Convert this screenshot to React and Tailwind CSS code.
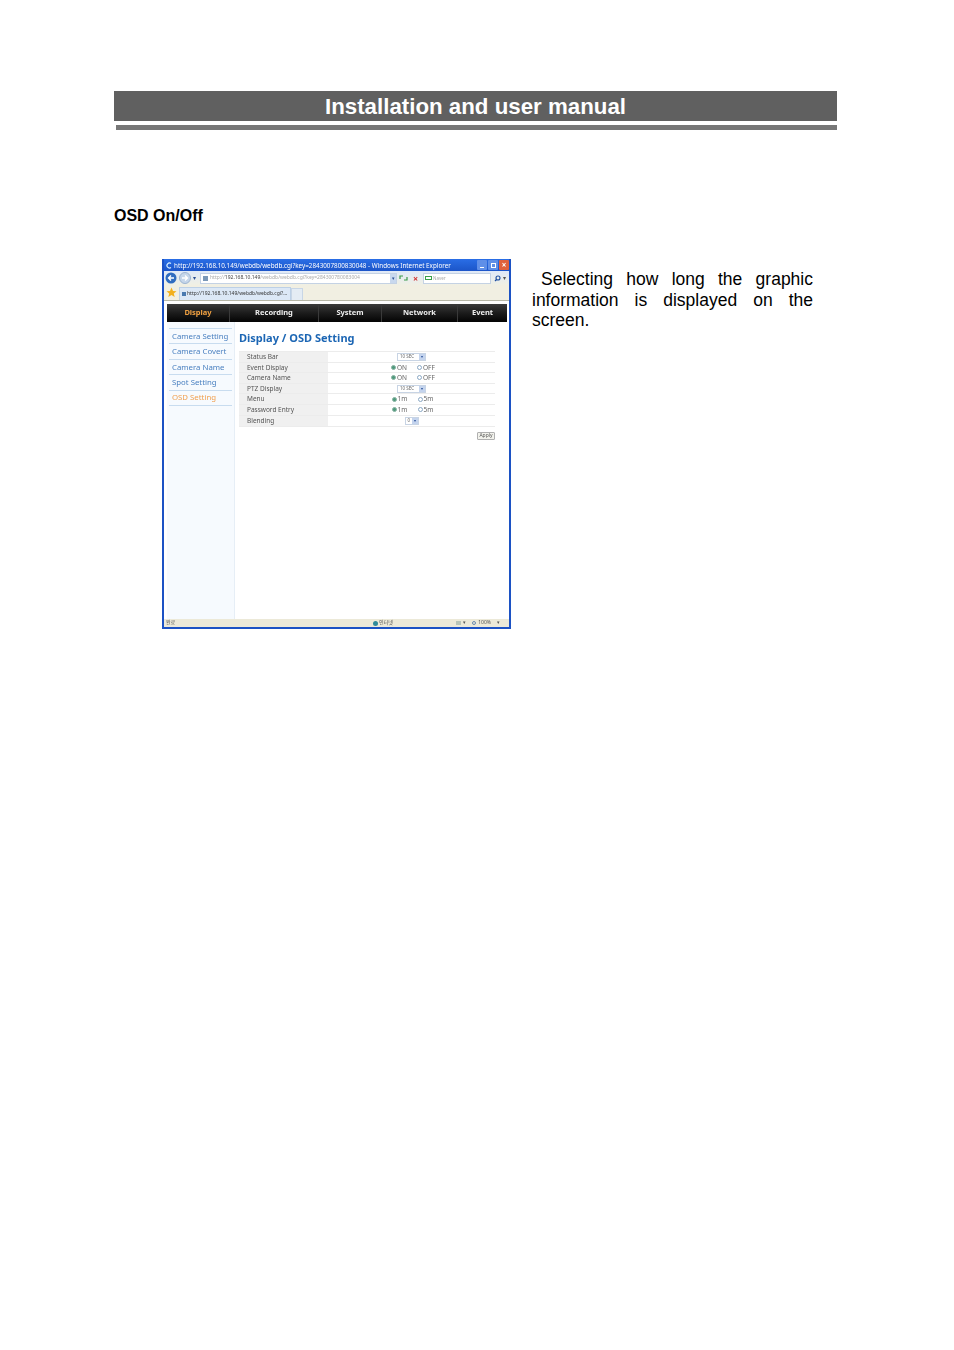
const sideItems = ["Camera Setting", "Camera Covert", "Camera Name", "Spot Setting", "OSD Setting"];

const navItems = [
    { label: "Display", width: "w-[63px]", active: true },
    { label: "Recording", width: "w-[89px]" },
    { label: "System", width: "w-[63px]" },
    { label: "Network", width: "w-[76px]" },
    { label: "Event", width: "w-[49px]" },
];

const Select = ({ label, width }) => (
    <span className={`flex h-[8px] items-center justify-between border border-[#c8d4e4] bg-white pl-[2px] text-[4.5px] text-[#666] ${width}`}>
        {label}
        <span className="flex h-full w-[6px] items-center justify-center bg-[#c4d4ee] text-[4px] leading-none text-[#2a4f96]">▾</span>
    </span>
);

const Radio = ({ checked, label, width }) => (
    <span className={`flex items-center gap-[1px] text-[6.5px] text-[#666] ${width}`}>
        <span className={`h-[5px] w-[5px] rounded-full border ${checked ? "border-[#8ab4a4] bg-[#4f9a7c]" : "border-[#8aa8c4] bg-white"}`} />
        {label}
    </span>
);

const RadioPair = ({ first, second, offset }) => (
    <div className={`flex items-center ${offset}`}>
        <Radio checked label={first} width="w-[26px]" />
        <Radio label={second} width="w-[24px]" />
    </div>
);

const rows = [
    { label: "Status Bar", value: <Select label="10 SEC" width="w-[29px]" /> },
    { label: "Event Display", value: <RadioPair first="ON" second="OFF" offset="ml-[9px]" /> },
    { label: "Camera Name", value: <RadioPair first="ON" second="OFF" offset="ml-[9px]" /> },
    { label: "PTZ Display", value: <Select label="10 SEC" width="w-[29px]" /> },
    { label: "Menu", value: <RadioPair first="1m" second="5m" offset="ml-[10px]" /> },
    { label: "Password Entry", value: <RadioPair first="1m" second="5m" offset="ml-[10px]" /> },
    { label: "Blending", value: <Select label="0" width="w-[14px]" /> },
];

const BrowserChrome = () => (
    <>
        <div className="flex h-[12px] items-center justify-between bg-gradient-to-b from-[#2a6ee6] to-[#1c55c8] pl-[2px]">
            <span className="flex items-center gap-[2px] pt-[1px] text-[6.3px] whitespace-nowrap text-white">
                <svg width="6" height="7" viewBox="0 0 6 7">
                    <path d="M5 1.500A2.500 2.500 0 1 0 5 5.500" fill="none" stroke="#d8f0ff" strokeWidth="1.2" />
                </svg>
                http://192.168.10.149/webdb/webdb.cgi?key=2843007800830048 - Windows Internet Explorer
            </span>
            <div className="flex gap-[1px]">
                <span className="flex h-[10px] w-[10px] items-end justify-center rounded-[1px] bg-[#5f8fe8] pb-[2px]">
                    <span className="h-[1px] w-[4px] bg-white" />
                </span>
                <span className="flex h-[10px] w-[10px] items-center justify-center rounded-[1px] bg-[#5f8fe8]">
                    <span className="h-[5px] w-[5px] border border-white" />
                </span>
                <span className="flex h-[10px] w-[10px] items-center justify-center rounded-[1px] bg-[#e0623c] text-[8px] leading-none font-bold text-white">×</span>
            </div>
        </div>
        <div className="flex h-[14px] items-center bg-gradient-to-b from-[#dfe9f8] to-[#f0f0e4] pl-[1px]">
            <svg width="13" height="12" viewBox="0 0 13 12" className="shrink-0">
                <circle cx="6" cy="6" r="5.500" fill="#2f6cc0" />
                <path d="M9 6H4M6 3.500 3.500 6 6 8.500" fill="none" stroke="#fff" strokeWidth="1.4" />
            </svg>
            <svg width="12" height="12" viewBox="0 0 12 12" className="ml-[1px] shrink-0">
                <circle cx="6" cy="6" r="5.500" fill="#c5d6ea" stroke="#9db4d0" />
                <path d="M3 6h5M6 3.500 8.500 6 6 8.500" fill="none" stroke="#fff" strokeWidth="1.3" />
            </svg>
            <span className="ml-[2px] w-[6px] text-[6px] leading-none text-[#2a4f96]">▾</span>
            <div className="ml-[1px] flex h-[11px] w-[197px] items-center justify-between border border-[#c4d2e4] bg-white pl-[2px]">
                <span className="flex items-center gap-[2px] overflow-hidden text-[5px] whitespace-nowrap text-[#aaa]">
                    <span className="h-[5px] w-[5px] shrink-0 bg-[#7a98b8]" />
                    <span>http://<span className="text-[#444]">192.168.10.149</span>/webdb/webdb.cgi?key=284300780083004</span>
                </span>
                <span className="flex h-full w-[6px] shrink-0 items-center justify-center bg-[#c8d8ee] text-[5px] leading-none text-[#2a4f96]">▾</span>
            </div>
            <svg width="11" height="8" viewBox="0 0 11 8" className="ml-[1px] shrink-0">
                <path d="M2 5V2h3M9 3v3H6" fill="none" stroke="#3a9a4a" strokeWidth="1.2" />
            </svg>
            <span className="ml-[1px] w-[11px] text-center text-[9px] leading-none font-bold text-[#d03030]">×</span>
            <div className="ml-[2px] flex h-[11px] w-[68px] items-center gap-[1px] border border-[#c4d2e4] bg-white pl-[1px] text-[4.5px] text-[#aaa]">
                <span className="h-[4px] w-[7px] border border-[#3aa04a]" />
                Naver
            </div>
            <svg width="7" height="7" viewBox="0 0 7 7" className="ml-[3px] shrink-0">
                <circle cx="4" cy="3" r="2" fill="none" stroke="#1f4fa0" strokeWidth="1.1" />
                <path d="M2.500 4.500 1 6" stroke="#1f4fa0" strokeWidth="1.300" />
            </svg>
            <span className="ml-[2px] text-[6px] leading-none text-[#555]">▾</span>
        </div>
        <div className="flex h-[16px] items-end border-b border-[#b8b8a8] bg-[#f1efe2] pl-[2px]">
            <svg width="11" height="11" viewBox="0 0 11 11" className="mb-[2px] shrink-0">
                <path d="m5.500.5 1.500 3.400 3.500.3-2.700 2.300.9 3.600-3.200-2-3.200 2 .9-3.600L.5 4.200 4 3.900z" fill="#f2b01e" />
            </svg>
            <div className="ml-[2px] flex h-[13px] w-[112px] items-center gap-[1px] border border-b-0 border-[#bcd0e6] bg-[#dce8f6] pl-[2px] text-[5px] whitespace-nowrap text-[#333]">
                <span className="h-[4px] w-[4px] shrink-0 bg-[#4a7ab0]" />
                http://192.168.10.149/webdb/webdb.cgi?...
            </div>
            <div className="h-[12px] w-[12px] border border-b-0 border-[#c8d6e6] bg-[#e4ecf4]" />
        </div>
    </>
);

const AppScreen = () => (
    <div className="flex min-h-0 flex-1 flex-col bg-white pt-[3px] pr-[2px] pl-[3px]">
        <div className="flex h-[18px] shrink-0 bg-gradient-to-b from-[#3c3c3c] via-[#1c1c1c] to-[#050505]">
            {navItems.map((item) => (
                <div
                    key={item.label}
                    className={`flex items-center justify-center border-r border-[#3a3a3a] text-[7.5px] font-bold last:border-r-0 ${item.width} ${item.active ? "text-[#f0a040]" : "text-[#eeeeee]"}`}
                >
                    {item.label}
                </div>
            ))}
        </div>
        <div className="flex min-h-0 flex-1">
            <div className="w-[68px] shrink-0 border-r border-[#e6eef6] bg-[#f6fafe] pt-[6px] pl-[2px]">
                <div className="w-[63px] border-t border-[#c8dcef]">
                    {sideItems.map((item) => (
                        <div
                            key={item}
                            className={`flex h-[15.400px] items-center border-b border-[#c8dcef] pt-[1px] pl-[3px] text-[7.8px] whitespace-nowrap ${item === "OSD Setting" ? "text-[#f0a050]" : "text-[#4a80c0]"}`}
                        >
                            {item}
                        </div>
                    ))}
                </div>
            </div>
            <div className="min-w-0 flex-1 pt-[8px] pl-[4px]">
                <div className="text-[11px] leading-[16px] font-bold whitespace-nowrap text-[#1c66b4]">Display / OSD Setting</div>
                <div className="mt-[5px] w-[256px] border-y border-[#ececec]">
                    {rows.map((row) => (
                        <div key={row.label} className="flex h-[10.6px] border-b border-[#ececec] last:border-b-0">
                            <div className="flex w-[89px] shrink-0 items-center bg-[#f0f0f0] pl-[8px] text-[6.5px] whitespace-nowrap text-[#555]">{row.label}</div>
                            <div className="flex flex-1 items-center justify-center">{row.value}</div>
                        </div>
                    ))}
                </div>
                <div className="mt-[5px] flex w-[256px] justify-end">
                    <span className="flex h-[8px] w-[18px] items-center justify-center rounded-[1px] border border-[#b0b0b0] bg-[#f2f2ec] text-[5px] text-[#555]">Apply</span>
                </div>
            </div>
        </div>
    </div>
);

const StatusBar = () => (
    <div className="flex h-[8px] shrink-0 items-center bg-[#ece9d8] px-[2px] text-[5px] text-[#555]">
        <span className="w-[207px]">완료</span>
        <span className="flex items-center gap-[1px]">
            <span className="h-[5px] w-[5px] rounded-full bg-[#2f8a9a]" />
            인터넷
        </span>
        <span className="ml-auto flex items-center pr-[7px]">
            <span className="mr-[2px] h-[4px] w-[5px] bg-[#b8c4b8]" />
            <span>▾</span>
            <span className="ml-[6px] h-[4px] w-[4px] rounded-full border border-[#6a8ab0]" />
            <span className="ml-[2px]">100%</span>
            <span className="ml-[6px]">▾</span>
        </span>
    </div>
);

const App = () => (
    <div className="h-[1350px] w-[954px] bg-white pt-[91px] pl-[114px] font-['Liberation_Sans',Arial,sans-serif] text-black">
        <div className="flex h-[30px] w-[723px] items-center justify-center bg-[#606060] pt-[1px] text-[22.300px] font-bold text-white">
            Installation and user manual
        </div>
        <div className="mt-[4px] ml-[2px] h-[5px] w-[721px] bg-[#777777]" />

        <h2 className="mt-[77px] text-[16px] leading-[18px] font-bold">OSD On/Off</h2>

        <div className="mt-[34px] ml-[48px] flex items-start">
            <div className="flex h-[370px] w-[349px] shrink-0 flex-col overflow-hidden border-2 border-t-0 border-[#1c52c4] font-['Noto_Sans','Noto_Sans_CJK_KR','Liberation_Sans',sans-serif] blur-[0.3px]">
                <BrowserChrome />
                <AppScreen />
                <StatusBar />
            </div>
            <div className="mt-[10px] ml-[21px] w-[281px] text-justify text-[17.500px] leading-[20.500px]">
                <span className="ml-[9px]">Selecting how long the graphic information is displayed on the screen.</span>
            </div>
        </div>
    </div>
);

export default App;
